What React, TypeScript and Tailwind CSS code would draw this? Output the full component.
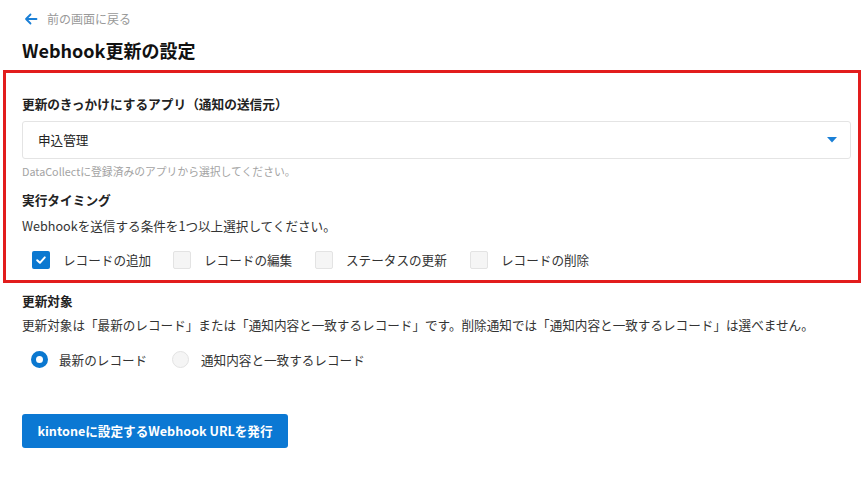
import React from "react";

const font = { fontFamily: '"Noto Sans CJK JP", "Noto Sans", sans-serif' };

function Checkbox({ checked, label, width }: { checked?: boolean; label: string; width: string }) {
  return (
    <div className={`flex items-center ${width}`}>
      {checked ? (
        <div className="w-[18px] h-[18px] rounded-[2px] bg-[#0b78d0] flex items-center justify-center">
          <svg width="12" height="12" viewBox="0 0 12 12">
            <path d="M2.2 6.2 L4.9 8.8 L9.8 3.4" stroke="white" strokeWidth="2" fill="none" strokeLinecap="round" strokeLinejoin="round" />
          </svg>
        </div>
      ) : (
        <div className="w-[18px] h-[18px] rounded-[2px] bg-[#f5f5f5] border border-[#e3e3e3]" />
      )}
      <span className="ml-[13px] text-[12.6px] text-[#333]">{label}</span>
    </div>
  );
}

export default function App() {
  return (
    <div style={font} className="bg-white w-[864px] h-[481px] px-[3px] text-[#333]">
      <div className="px-[19px] pt-[9px]">
        <div className="flex items-center h-[20px]">
          <svg width="14" height="12" viewBox="0 0 14 12" className="ml-[2px]">
            <path d="M12.5 6 H2 M6.5 1.5 L2 6 L6.5 10.5" stroke="#1a7fd6" strokeWidth="1.8" fill="none" strokeLinecap="round" strokeLinejoin="round" />
          </svg>
          <span className="ml-[9px] text-[12px] text-[#999]">前の画面に戻る</span>
        </div>
        <h1 className="mt-[8px] text-[18px] font-bold text-[#111] leading-[26px]">Webhook更新の設定</h1>
      </div>

      <div className="mt-[7px] border-[3px] border-[#e21d1d] pl-[16px] pr-[7px] pt-[21px] pb-[9px]">
        <div className="text-[12.7px] font-bold leading-[20px] text-[#222]">更新のきっかけにするアプリ（通知の送信元）</div>
        <div className="mt-[7px] h-[38px] border border-[#e4e4e4] rounded-[3px] flex items-center justify-between pl-[15px] pr-[13px]">
          <span className="text-[12.6px] text-[#222]">申込管理</span>
          <svg width="10" height="6" viewBox="0 0 10 6">
            <path d="M0 0 H10 L5 5.5 Z" fill="#1a7fd6" />
          </svg>
        </div>
        <div className="mt-[3px] text-[10.8px] leading-[18px] text-[#a3a3a3]">DataCollectに登録済みのアプリから選択してください。</div>
        <div className="mt-[10px] text-[12.7px] font-bold leading-[20px] text-[#222]">実行タイミング</div>
        <div className="mt-[6px] text-[12.6px] leading-[20px] text-[#333]">Webhookを送信する条件を1つ以上選択してください。</div>
        <div className="mt-[13px] flex items-center pl-[10px] h-[22px]">
          <Checkbox checked label="レコードの追加" width="w-[141px]" />
          <Checkbox label="レコードの編集" width="w-[142px]" />
          <Checkbox label="ステータスの更新" width="w-[155px]" />
          <Checkbox label="レコードの削除" width="w-[140px]" />
        </div>
      </div>

      <div className="px-[19px]">
        <div className="mt-[8px] text-[12.7px] font-bold leading-[20px] text-[#222]">更新対象</div>
        <div className="mt-[4px] text-[12.6px] leading-[20px] text-[#333]">更新対象は「最新のレコード」または「通知内容と一致するレコード」です。削除通知では「通知内容と一致するレコード」は選べません。</div>
        <div className="mt-[15px] flex items-center pl-[9px] h-[20px]">
          <div className="flex items-center w-[141px]">
            <div className="w-[17px] h-[17px] rounded-full border-[5px] border-[#0b78d0] bg-white" />
            <span className="ml-[11px] text-[12.6px]">最新のレコード</span>
          </div>
          <div className="flex items-center">
            <div className="w-[17px] h-[17px] rounded-full border border-[#e3e3e3] bg-[#f5f5f5]" />
            <span className="ml-[12px] text-[12.6px]">通知内容と一致するレコード</span>
          </div>
        </div>
        <button className="mt-[44px] h-[34px] w-[266px] rounded-[3px] bg-[#0b78d3] text-white text-[12.6px] font-bold">
          kintoneに設定するWebhook URLを発行
        </button>
      </div>
    </div>
  );
}
